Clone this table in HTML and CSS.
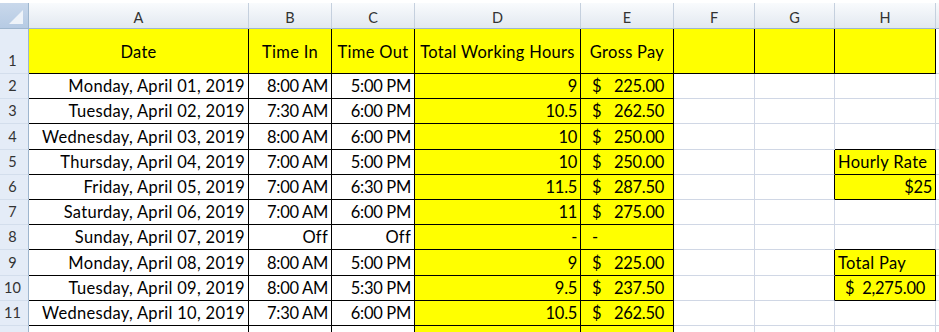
FILE: index.html
```html
<!DOCTYPE html>
<html lang="en">
<head>
<meta charset="utf-8">
<title>Working Hours</title>
<link rel="stylesheet" href="styles.css">
</head>
<body>
<div class="sheet">
  <div class="corner"><svg class="tri" width="14" height="14" viewBox="0 0 14 14"><polygon points="14,0 14,14 0,14" fill="#eef3f9"/></svg></div>
  <div class="ch">A</div><div class="ch">B</div><div class="ch">C</div><div class="ch">D</div><div class="ch">E</div><div class="ch">F</div><div class="ch">G</div><div class="ch">H</div><div class="ch"></div>

  <div class="rh">1</div>
  <div class="c b y ctr mid">Date</div><div class="c b y ctr mid">Time In</div><div class="c b y ctr mid">Time Out</div><div class="c b y ctr mid">Total Working Hours</div><div class="c b y ctr mid">Gross Pay</div><div class="c b y"></div><div class="c b y"></div><div class="c b y"></div><div class="c"></div>

  <div class="rh">2</div>
  <div class="c b r">Monday, April 01, 2019</div><div class="c b r n">8:00 AM</div><div class="c b r n">5:00 PM</div><div class="c b y r n">9</div><div class="c b y acc n"><span>$</span><span>225.00</span></div><div class="c"></div><div class="c"></div><div class="c"></div><div class="c"></div>

  <div class="rh">3</div>
  <div class="c b r">Tuesday, April 02, 2019</div><div class="c b r n">7:30 AM</div><div class="c b r n">6:00 PM</div><div class="c b y r n">10.5</div><div class="c b y acc n"><span>$</span><span>262.50</span></div><div class="c"></div><div class="c"></div><div class="c"></div><div class="c"></div>

  <div class="rh">4</div>
  <div class="c b r">Wednesday, April 03, 2019</div><div class="c b r n">8:00 AM</div><div class="c b r n">6:00 PM</div><div class="c b y r n">10</div><div class="c b y acc n"><span>$</span><span>250.00</span></div><div class="c"></div><div class="c"></div><div class="c bb"></div><div class="c"></div>

  <div class="rh">5</div>
  <div class="c b r">Thursday, April 04, 2019</div><div class="c b r n">7:00 AM</div><div class="c b r n">5:00 PM</div><div class="c b y r n">10</div><div class="c b y acc n"><span>$</span><span>250.00</span></div><div class="c"></div><div class="c br"></div><div class="c b y">Hourly Rate</div><div class="c"></div>

  <div class="rh">6</div>
  <div class="c b r">Friday, April 05, 2019</div><div class="c b r n">7:00 AM</div><div class="c b r n">6:30 PM</div><div class="c b y r n">11.5</div><div class="c b y acc n"><span>$</span><span>287.50</span></div><div class="c"></div><div class="c br"></div><div class="c b y r n">$25</div><div class="c"></div>

  <div class="rh">7</div>
  <div class="c b r">Saturday, April 06, 2019</div><div class="c b r n">7:00 AM</div><div class="c b r n">6:00 PM</div><div class="c b y r n">11</div><div class="c b y acc n"><span>$</span><span>275.00</span></div><div class="c"></div><div class="c"></div><div class="c"></div><div class="c"></div>

  <div class="rh">8</div>
  <div class="c b r">Sunday, April 07, 2019</div><div class="c b r">Off</div><div class="c b r">Off</div><div class="c b y r n">-</div><div class="c b y acc n"><span>-</span><span></span></div><div class="c"></div><div class="c"></div><div class="c bb"></div><div class="c"></div>

  <div class="rh">9</div>
  <div class="c b r">Monday, April 08, 2019</div><div class="c b r n">8:00 AM</div><div class="c b r n">5:00 PM</div><div class="c b y r n">9</div><div class="c b y acc n"><span>$</span><span>225.00</span></div><div class="c"></div><div class="c br"></div><div class="c b y">Total Pay</div><div class="c"></div>

  <div class="rh">10</div>
  <div class="c b r">Tuesday, April 09, 2019</div><div class="c b r n">8:00 AM</div><div class="c b r n">5:30 PM</div><div class="c b y r n">9.5</div><div class="c b y acc n"><span>$</span><span>237.50</span></div><div class="c"></div><div class="c br"></div><div class="c b y acc acc-h n"><span>$</span><span>2,275.00</span></div><div class="c"></div>

  <div class="rh">11</div>
  <div class="c b r">Wednesday, April 10, 2019</div><div class="c b r n">7:30 AM</div><div class="c b r n">6:00 PM</div><div class="c b y r n">10.5</div><div class="c b y acc n"><span>$</span><span>262.50</span></div><div class="c"></div><div class="c"></div><div class="c"></div><div class="c"></div>

  <div class="rh"></div>
  <div class="c b"></div><div class="c b"></div><div class="c b"></div><div class="c b y"></div><div class="c b y"></div><div class="c"></div><div class="c"></div><div class="c"></div><div class="c"></div>
</div>
</body>
</html>
```
FILE: styles.css
```css
html, body {
  margin: 0;
  padding: 0;
  background: #ffffff;
  overflow: hidden;
}

body {
  padding-top: 3px;
  font-family: Lato, "Liberation Sans", sans-serif;
  font-size: 16.5px;
  letter-spacing: 0.3px;
  color: #000;
}

.sheet {
  display: grid;
  grid-template-columns: 29px 220px 83px 83px 166px 93px 81px 80px 101px 1fr;
  grid-template-rows: 26px 45px repeat(10, 25.2px) 25px;
  width: 939px;
}

.sheet > div {
  box-sizing: border-box;
  overflow: hidden;
  white-space: nowrap;
}

.corner {
  background: linear-gradient(#c9d8eb, #b6cbe4);
  border-right: 1px solid #9eb6ce;
  border-bottom: 1px solid #9eb6ce;
  display: flex;
  align-items: flex-end;
  justify-content: flex-end;
  padding: 0 5px 4px 0;
}

.tri {
  display: block;
}

.ch {
  background: linear-gradient(#f9fbfd, #e2e8f0);
  border-right: 1px solid #c5d0de;
  border-bottom: 1px solid #9eb6ce;
  display: flex;
  align-items: center;
  justify-content: center;
  padding-top: 3px;
  font-size: 14.5px;
  letter-spacing: 0;
  color: #333;
}

.rh {
  background: #e4ecf7;
  border-right: 1px solid #9eb6ce;
  border-bottom: 1px solid #d3deec;
  display: flex;
  align-items: flex-end;
  justify-content: center;
  padding: 0 3px 4px 0;
  font-size: 14.5px;
  letter-spacing: 0;
  line-height: 16px;
  color: #333;
}

.c {
  border-right: 1px solid #d0d7e5;
  border-bottom: 1px solid #d0d7e5;
  display: flex;
  align-items: flex-end;
  padding: 0 3px;
  line-height: 24px;
}

.n {
  letter-spacing: -0.3px;
}

.b {
  border-right-color: #000;
  border-bottom-color: #000;
}

.bb {
  border-bottom-color: #000;
}

.br {
  border-right-color: #000;
}

.y {
  background: #ffff00;
}

.r {
  justify-content: flex-end;
}

.ctr {
  justify-content: center;
}

.mid {
  align-items: center;
  padding-top: 2px;
}

.acc {
  justify-content: space-between;
  padding: 0 9px 0 11px;
}

.acc-h {
  padding: 0 10px 0 10px;
}

.acc-h span:last-child {
  margin-left: 8px;
}
```
